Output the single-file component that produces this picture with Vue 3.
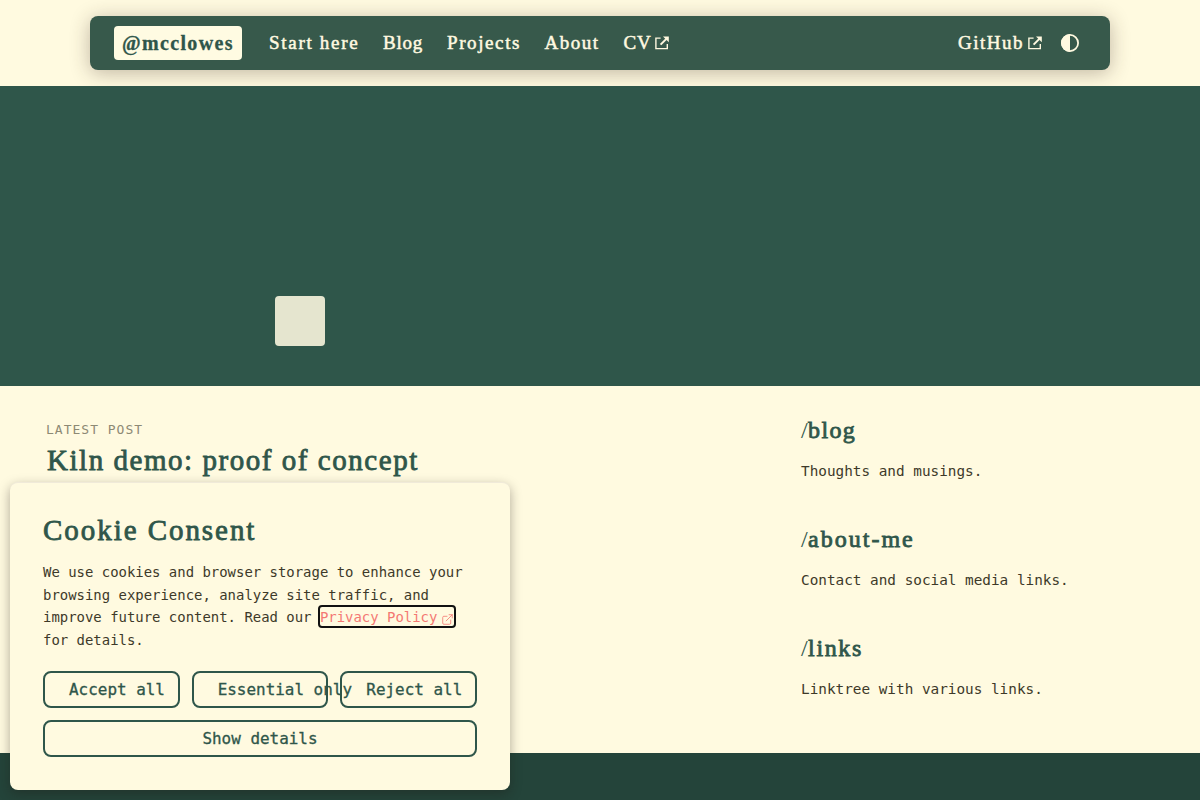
<script setup>
const links = [
  { label: 'Start here', cls: 'start' },
  { label: 'Blog', cls: 'blog' },
  { label: 'Projects', cls: 'projects' },
  { label: 'About', cls: 'about' },
  { label: 'CV', cls: 'cv', external: true },
]
const sections = [
  { title: '/blog', text: 'Thoughts and musings.', cls: 's-blog' },
  { title: '/about-me', text: 'Contact and social media links.', cls: 's-about' },
  { title: '/links', text: 'Linktree with various links.', cls: 's-links' },
]
</script>

<template>
  <div class="page">
    <header class="header">
      <nav class="nav">
        <a class="brand">@mcclowes</a>
        <div class="links">
          <a v-for="l in links" :key="l.label" class="link" :class="l.cls">{{ l.label }}<svg v-if="l.external" class="ext" viewBox="0 0 14 14"><path fill="none" stroke="currentColor" stroke-width="1.4" d="M5.6 2.1H.9V12.6H12.3V8" /><path fill="none" stroke="currentColor" stroke-width="2" d="M5.6 8.6L11.6 2.6" /><path fill="currentColor" d="M8 .6H13.8V6.3z" /></svg></a>
        </div>
        <a class="link github">GitHub<svg class="ext" viewBox="0 0 14 14"><path fill="none" stroke="currentColor" stroke-width="1.4" d="M5.6 2.1H.9V12.6H12.3V8" /><path fill="none" stroke="currentColor" stroke-width="2" d="M5.6 8.6L11.6 2.6" /><path fill="currentColor" d="M8 .6H13.8V6.3z" /></svg></a>
        <svg class="theme" viewBox="0 0 18 18"><circle cx="9" cy="9" r="8.1" fill="none" stroke="currentColor" stroke-width="1.8" /><path fill="currentColor" d="M9 0a9 9 0 0 0 0 18z" /></svg>
      </nav>
    </header>
    <section class="hero"><div class="tile"></div></section>
    <main class="main">
      <article class="latest">
        <div class="eyebrow">LATEST POST</div>
        <h2 class="title">Kiln demo: proof of concept</h2>
      </article>
      <aside class="aside">
        <section v-for="s in sections" :key="s.title" class="entry">
          <h3 :class="s.cls"><span class="slash">/</span>{{ s.title.slice(1) }}</h3>
          <p>{{ s.text }}</p>
        </section>
      </aside>
    </main>
    <footer class="footer"></footer>

    <div class="cookie">
      <h2 class="cookie-title">Cookie Consent</h2>
      <p class="copy">We use cookies and browser storage to enhance your<br />browsing experience, analyze site traffic, and<br />improve future content. Read our <a class="privacy">Privacy Policy<svg viewBox="0 0 12 12"><path fill="none" stroke="currentColor" stroke-width=".9" stroke-linecap="round" stroke-linejoin="round" d="M5.5 2.5H2A1.2 1.2 0 0 0 .8 3.7V10A1.2 1.2 0 0 0 2 11.2h6.3A1.2 1.2 0 0 0 9.5 10V6.5M7.7.8h3.5v3.5M11.2.8L4.5 7.5" /></svg></a><br />for details.</p>
      <div class="buttons">
        <button class="offset">Accept all</button>
        <button class="offset">Essential only</button>
        <button class="offset">Reject all</button>
        <button class="wide">Show details</button>
      </div>
    </div>
  </div>
</template>

<style>
body { margin: 0; background: #fffae0; overflow: hidden; }
</style>

<style scoped>
* { box-sizing: border-box; }
.page { height: 800px; display: flex; flex-direction: column; overflow: hidden; background: #fffae0; color: #3d3929; font-family: "DejaVu Sans Mono", monospace; }
h2, h3, p { margin: 0; }
.header { height: 86px; padding: 16px 90px 0; flex: none; }
.nav { height: 54px; border-radius: 8px; background: #37594b; display: flex; align-items: center; padding: 0 31px 0 24px; color: #fff9e0; font-family: "Liberation Serif", serif; font-size: 19px; box-shadow: 0 3px 20px rgba(60, 40, 30, .32); }
.brand { width: 128px; height: 34px; padding-left: 8px; border-radius: 4px; background: #fffbe2; color: #2f564a; font-size: 20px; font-weight: 700; line-height: 34px; letter-spacing: 1.35px; -webkit-text-stroke: .3px currentColor; white-space: nowrap; }
.links { display: flex; flex: 1; margin-left: 27px; }
.link { white-space: nowrap; line-height: 34px; -webkit-text-stroke: .5px currentColor; letter-spacing: 1px; display: flex; align-items: center; }
.start { width: 114px; letter-spacing: 1.7px; }
.blog { width: 64px; letter-spacing: .8px; }
.projects { width: 97.5px; letter-spacing: 1.6px; }
.about { width: 79px; letter-spacing: 1.5px; }
.cv { letter-spacing: .8px; }
.github { letter-spacing: 1.5px; }
.ext { width: 14px; height: 14px; margin-left: 3px; -webkit-text-stroke: 0; }
.github .ext { margin-left: 4px; }
.theme { width: 18px; height: 18px; margin-left: 19px; }
.hero { height: 300px; flex: none; background: #2f564a; padding: 210px 0 0 275px; }
.tile { width: 50px; height: 50px; border-radius: 4px; background: #e5e5cf; }
.main { height: 367px; flex: none; display: flex; }
.latest { width: 801px; padding: 34px 0 0 46px; }
.eyebrow { font-size: 13px; line-height: 20px; letter-spacing: 1px; color: #8d8974; }
.title, .cookie-title, h3 { font-family: "Liberation Serif", serif; font-weight: 400; color: #2f564a; -webkit-text-stroke: .8px currentColor; white-space: nowrap; }
.title { font-size: 29px; line-height: 40px; letter-spacing: 1.54px; margin-left: 1px; }
.aside { padding-top: 28px; }
.entry { height: 109px; }
h3 { font-size: 24px; line-height: 32px; letter-spacing: 1.35px; }
.slash { -webkit-text-stroke: 0; letter-spacing: .4px; }
.s-about { letter-spacing: 2px; }
.s-links { letter-spacing: 1.65px; }
.entry p { font-size: 14.35px; line-height: 24px; margin-top: 13px; }
.footer { flex: 1; background: #24443a; }
.cookie { position: absolute; left: 10px; top: 482px; width: 500px; height: 308px; padding: 28px 33px 33px; border-radius: 8px; background: #fffae0; border-top: 1px solid #f0ead9; box-shadow: 0 4px 12px rgba(30, 25, 20, .36); }
.cookie-title { font-size: 29px; line-height: 38px; letter-spacing: 1.95px; }
.copy { margin-top: 12px; font-size: 13.95px; line-height: 22.6px; white-space: nowrap; }
.privacy { color: #f47873; outline: 2px solid #111; outline-offset: 0; padding: 2px 0 1px 0; border-radius: 2px; }
.privacy svg { width: 11px; height: 11px; margin-left: 5px; margin-right: 1px; vertical-align: -2.5px; }
.buttons { display: grid; grid-template-columns: repeat(3, 1fr); gap: 12px; margin-top: 20px; }
button { height: 37px; min-width: 0; border: 2px solid #2f564a; border-radius: 8px; background: transparent; padding: 1px 0 0; color: #2f564a; font: 15.95px/32px "DejaVu Sans Mono", monospace; -webkit-text-stroke: .3px currentColor; white-space: nowrap; }
.offset { padding-left: 24px; text-align: left; }
.wide { grid-column: 1 / -1; }
</style>
